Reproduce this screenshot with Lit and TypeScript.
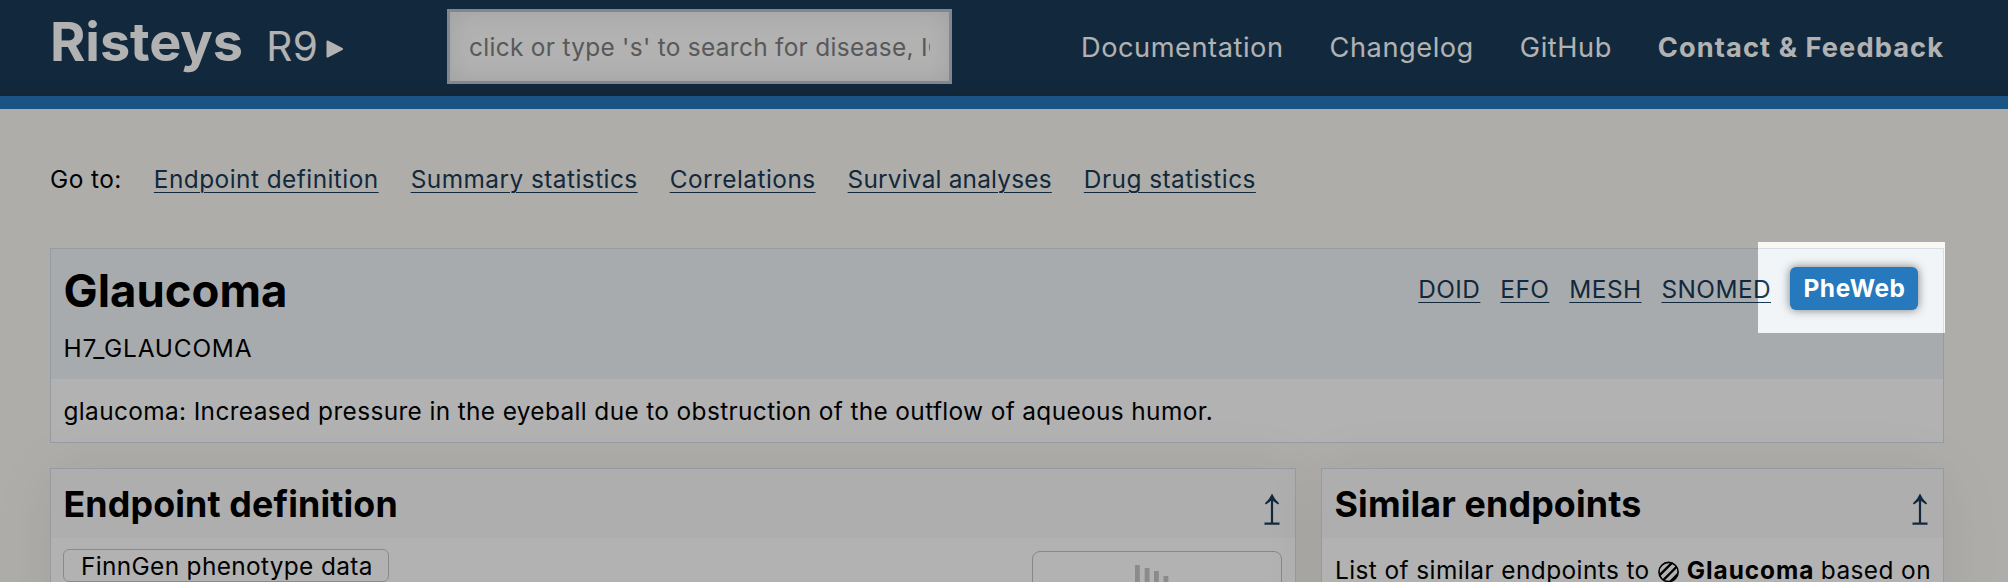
import { LitElement, html, css, svg } from "lit";
import { customElement } from "lit/decorators.js";
import { classMap } from "lit/directives/class-map.js";

const sections = [
  "Endpoint definition",
  "Summary statistics",
  "Correlations",
  "Survival analyses",
  "Drug statistics",
];
const ontologies = ["DOID", "EFO", "MESH", "SNOMED"];
const bars = [
  { x: 0, y: 0 },
  { x: 9.7, y: 3 },
  { x: 19, y: 6 },
  { x: 28.5, y: 11 },
];

@customElement("app-root")
export class AppRoot extends LitElement {
  static styles = css`
    :host {
      display: block;
      position: relative;
      width: 2008px;
      height: 582px;
      overflow: hidden;
      box-sizing: border-box;
      background: #faf8f3;
      color: #000;
      font: 400 24.4px/36px Inter, sans-serif;
      letter-spacing: 0.42px;
      white-space: nowrap;
    }
    * { box-sizing: border-box; }
    a { color: inherit; text-decoration: none; }
    h1, h2, p { margin: 0; }

    .top {
      display: flex;
      align-items: center;
      height: 109px;
      padding: 0 64px 3px 50px;
      border-bottom: 13px solid #2779bd;
      background: linear-gradient(#193a58 0 80px, #1a364f 96px);
      color: #fff;
    }
    .brand {
      display: flex;
      align-items: baseline;
      width: 397px;
      margin-bottom: 4px;
      line-height: 54px;
    }
    .name { font-size: 54px; font-weight: 700; letter-spacing: -0.1px; }
    .release { width: 53px; margin-left: 23.5px; font-size: 40.5px; font-weight: 400; letter-spacing: 0.3px; }
    .play { margin-left: 7px; width: 18px; height: 18px; align-self: center; position: relative; top: 4px; }
    .search {
      width: 505px;
      height: 75px;
      padding: 0 19px;
      border: 3px solid #b8c2cc;
      border-radius: 0;
      background: #fff;
      box-shadow: inset 0 0 26px rgba(0, 0, 0, 0.1);
      font: inherit;
      letter-spacing: 0.31px;
      outline: none;
    }
    .search::placeholder { color: #808080; opacity: 1; }
    .menu {
      display: flex;
      gap: 46px;
      margin-left: auto;
      margin-top: 2px;
      font-size: 27.2px;
      letter-spacing: 0.55px;
    }
    .contact { font-weight: 700; letter-spacing: 1.1px; }

    .goto {
      display: flex;
      gap: 32px;
      padding: 52px 50px 0;
      height: 139px;
      letter-spacing: 0.46px;
    }
    .link {
      color: #1a3a58;
      text-decoration: underline;
      text-decoration-thickness: 1px;
      text-underline-offset: 4px;
    }
    .tight { letter-spacing: 0.2px; }

    .card { border: 1px solid #d5dfe8; background: #fff; }
    .summary { margin: 0 64px 0 50px; height: 195px; }
    .summary-head {
      display: flex;
      justify-content: space-between;
      align-items: flex-start;
      height: 130px;
      padding: 14px 25px 0 12.5px;
      background: #f1f5f8;
    }
    h1 { font-size: 45.5px; line-height: 56px; letter-spacing: 0; margin-bottom: 11px; }
    .code { letter-spacing: 0.8px; }
    .refs { display: flex; align-items: center; gap: 20px; margin-top: 4px; }
    .pheweb {
      margin-left: -1px;
      height: 43px;
      width: 128px;
      padding-left: 1px;
      text-align: center;
      line-height: 43px;
      border-radius: 6px;
      background: #2779bd;
      box-shadow: 0 0 10px rgba(0, 0, 0, 0.5);
      color: #fff;
      font-weight: 700;
      letter-spacing: 0.65px;
    }
    .description { padding: 14px 12.5px 0; letter-spacing: 0.37px; }

    .columns {
      display: grid;
      grid-template-columns: 1246px 623px;
      gap: 25px;
      padding: 25px 0 0 50px;
    }
    .panel { height: 240px; box-shadow: 0 4px 60px rgba(0, 0, 0, 0.07); }
    .panel-head {
      display: flex;
      justify-content: space-between;
      align-items: center;
      height: 69px;
      padding: 1px 15px 0 12.5px;
      background: #f9f9fa;
    }
    h2 { font-size: 35.8px; line-height: 44px; letter-spacing: 0.13px; }
    .up { width: 16px; height: 32px; margin-top: 9px; }
    .endpoint-body { display: flex; justify-content: space-between; padding: 11px 13.5px 0 12px; }
    .tag {
      width: 326px;
      height: 33px;
      padding: 0 17px;
      line-height: 32px;
      letter-spacing: 0.35px;
      border: 1px solid #c6c6c6;
      border-radius: 6px;
    }
    .thumb {
      width: 250px;
      height: 160px;
      margin-top: 2px;
      border: 1.5px solid #c2c2c2;
      border-radius: 8px;
    }
    .bars { display: block; margin: 13px 0 0 102.5px; }
    .similar { display: flex; padding: 14px 12px 0 13px; }
    .hatch { width: 22px; height: 22px; margin: 8.5px 8px 0 8px; }
    .strong { font-weight: 700; letter-spacing: 0.95px; margin-right: 6.5px; }

    .spotlight {
      position: absolute;
      left: 1758px;
      top: 242px;
      width: 187px;
      height: 91px;
      box-shadow: 0 0 0 2100px rgba(0, 0, 0, 0.3);
      pointer-events: none;
    }
  `;

  private upArrow() {
    return html`<svg class="up" viewBox="0 0 16 32">
      <path d="M6.9 8V29.5H.5v2.2h15v-2.2H9.1V8l5 3.4 1-1.1Q10.6 6.500 8 .5 5.400 6.500.9 10.300l1 1.100 5-3.400z" fill="#1a3a58" />
    </svg>`;
  }

  render() {
    return html`
      <header class="top">
        <div class="brand">
          <a class="name">Risteys</a>
          <span class="release">R9</span>
          <svg class="play" viewBox="0 0 18 18">
            <path d="M1.500 1.500 16 9 1.500 16.500z" fill="#fff" stroke="#fff" stroke-width="2" stroke-linejoin="round" />
          </svg>
        </div>
        <input class="search" placeholder="click or type 's' to search for disease, ICD-10, endpoint" />
        <nav class="menu">
          <a>Documentation</a><a>Changelog</a><a>GitHub</a><a class="contact">Contact &amp; Feedback</a>
        </nav>
      </header>
      <nav class="goto">
        <span>Go to:</span>
        ${sections.map(
          (s) => html`<a class=${classMap({ link: true, tight: s === "Survival analyses" })}>${s}</a>`,
        )}
      </nav>
      <section class="card summary">
        <div class="summary-head">
          <div>
            <h1>Glaucoma</h1>
            <p class="code">H7_GLAUCOMA</p>
          </div>
          <div class="refs">
            ${ontologies.map((o) => html`<a class="link">${o}</a>`)}
            <a class="pheweb">PheWeb</a>
          </div>
        </div>
        <p class="description">glaucoma: Increased pressure in the eyeball due to obstruction of the outflow of aqueous humor.</p>
      </section>
      <div class="columns">
        <section class="card panel">
          <div class="panel-head"><h2>Endpoint definition</h2>${this.upArrow()}</div>
          <div class="endpoint-body">
            <span class="tag">FinnGen phenotype data</span>
            <div class="thumb">
              <svg class="bars" width="34" height="60">
                ${bars.map((b) => svg`<rect x=${b.x} y=${b.y} width="4.8" height="60" fill="#c8c8c8" />`)}
              </svg>
            </div>
          </div>
        </section>
        <section class="card panel">
          <div class="panel-head"><h2>Similar endpoints</h2>${this.upArrow()}</div>
          <div class="similar">
            <span>List of similar endpoints to</span>
            <svg class="hatch" viewBox="0 0 22 22">
              <defs><clipPath id="disc"><circle cx="11" cy="11" r="10" /></clipPath></defs>
              <path clip-path="url(#disc)" d="M-6 13 13-6M-3 19 19-3M1 24 24 1M6 28 28 6" stroke="#000" stroke-width="2.5" />
              <circle cx="11" cy="11" r="10" fill="none" stroke="#000" stroke-width="1.7" />
            </svg>
            <span class="strong">Glaucoma</span><span>based on</span>
          </div>
        </section>
      </div>
      <div class="spotlight"></div>
    `;
  }
}
